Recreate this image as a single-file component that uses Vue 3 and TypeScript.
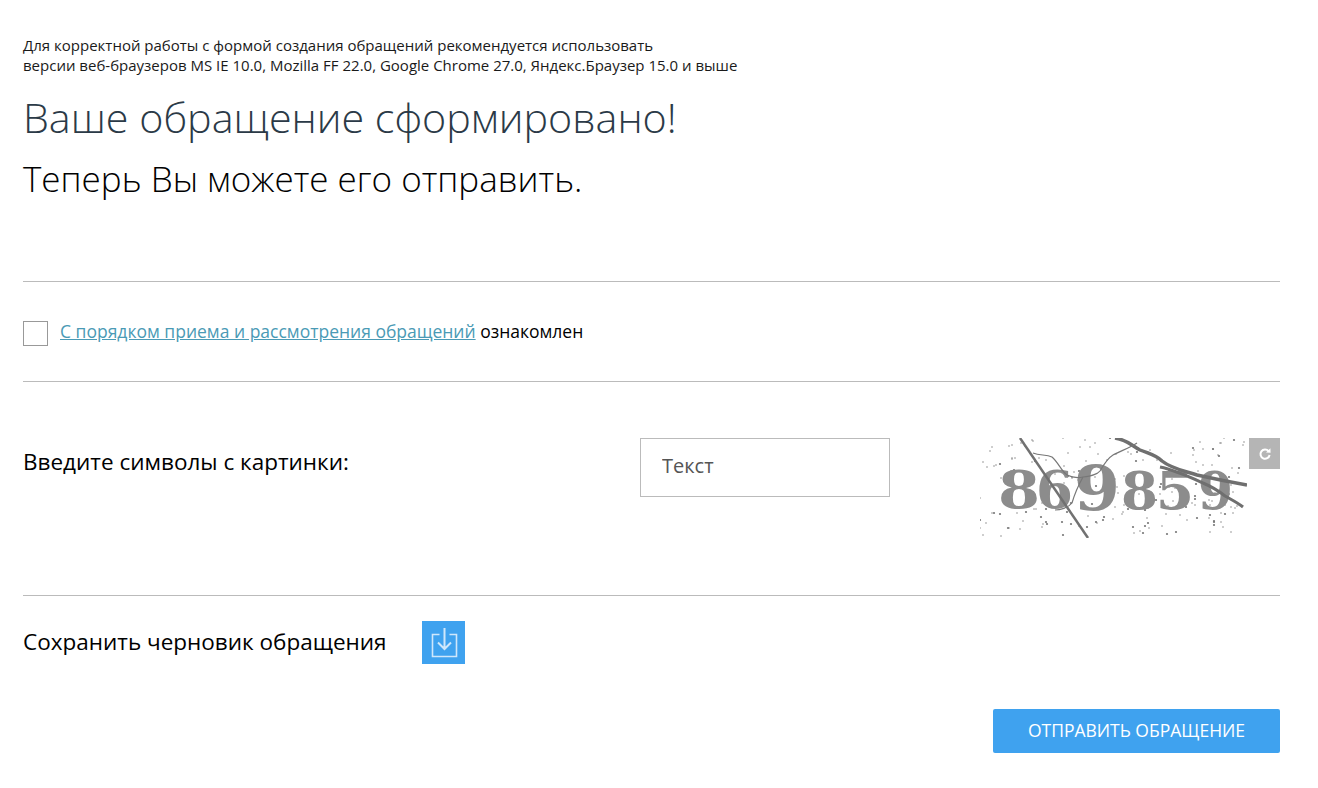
<script setup lang="ts">
// simple seeded noise so the captcha speckle stays the same between renders
let seed = 7
const rnd = () => {
  seed = (seed * 16807) % 2147483647
  return seed / 2147483647
}
const dots = Array.from({ length: 210 }, () => ({
  x: Math.round(rnd() * 265),
  y: Math.round(rnd() * 98),
  r: rnd() > 0.7 ? 1.1 : 0.7,
}))
const digits = [
  { ch: '8', x: 18, y: 70, size: 53, w: 42 },
  { ch: '6', x: 56, y: 70, size: 53, w: 37 },
  { ch: '9', x: 94, y: 72, size: 62, w: 46 },
  { ch: '8', x: 141, y: 71, size: 53, w: 37 },
  { ch: '5', x: 176, y: 71, size: 53, w: 38 },
  { ch: '9', x: 218, y: 71, size: 53, w: 35 },
]
</script>

<template>
  <div class="page">
    <p class="note">
      Для корректной работы с формой создания обращений рекомендуется использовать<br>
      версии веб-браузеров MS IE 10.0, Mozilla FF 22.0, Google Chrome 27.0, Яндекс.Браузер 15.0 и выше
    </p>
    <h1 class="title">Ваше обращение сформировано!</h1>
    <h2 class="subtitle">Теперь Вы можете его отправить.</h2>

    <div class="agree">
      <input class="agree__check" type="checkbox" id="agree">
      <label class="agree__label" for="agree"><a href="#" class="agree__link">С порядком приема и рассмотрения обращений</a> ознакомлен</label>
    </div>

    <div class="captcha">
      <div class="captcha__label">Введите символы с картинки:</div>
      <input class="captcha__input" type="text" placeholder="Текст">
      <svg class="captcha__image" width="267" height="100" viewBox="0 0 267 100">
        <circle v-for="(d, i) in dots" :key="i" :cx="d.x" :cy="d.y" :r="d.r" fill="#777" />
        <text
          v-for="(d, i) in digits"
          :key="'d' + i"
          :x="d.x"
          :y="d.y"
          :font-size="d.size"
          :textLength="d.w"
          lengthAdjust="spacingAndGlyphs"
          font-family="'DejaVu Serif', serif"
          font-weight="700"
          fill="#8c8c8c"
        >{{ d.ch }}</text>
        <path d="M40 0L108 100" stroke="#717171" stroke-width="2.5" fill="none" />
        <path d="M135 0C148 2 152 8 160 12C170 16 176 17 182 23C192 31 205 33 217 37C235 41 250 44 267 47" stroke="#6f6f6f" stroke-width="3.5" fill="none" />
        <path d="M180 29C195 32 212 40 223 45C235 50 240 54 245 58C252 62 258 65 263 69" stroke="#6f6f6f" stroke-width="3" fill="none" />
        <path d="M53 15C60 18 66 16 72 19C78 24 82 34 87 37C93 40 98 40 103 39C110 38 117 37 120 33C124 26 128 20 133 17C140 13 150 10 157 5M103 39C98 48 94 58 92 65C88 70 80 72 75 72" stroke="#777" stroke-width="1.2" fill="none" />
      </svg>
      <button class="captcha__refresh" type="button" aria-label="Обновить">
        <svg width="14" height="14" viewBox="0 0 14 14">
          <path d="M10.6 4.2A4.6 4.6 0 1 0 11.6 8" stroke="#fff" stroke-width="2" fill="none" />
          <path d="M8 5.4L12.6 5.8L12.4 1.2Z" fill="#fff" />
        </svg>
      </button>
    </div>

    <div class="draft">
      <span class="draft__label">Сохранить черновик обращения</span>
      <button class="draft__btn" type="button" aria-label="Сохранить">
        <svg class="draft__icon" width="27" height="32" viewBox="0 0 27 32">
          <path d="M8.5 7.5H1.5V29.5H25.5V7.5H18.5" stroke="#cfe7fb" stroke-width="1.6" fill="none" />
          <path d="M13.5 1V21.5M7 15.5L13.5 22L20 15.5" stroke="#cfe7fb" stroke-width="2" fill="none" />
        </svg>
      </button>
    </div>

    <div class="actions">
      <button class="submit" type="button">ОТПРАВИТЬ ОБРАЩЕНИЕ</button>
    </div>
  </div>
</template>

<style>
body {
  background: #fff;
}
</style>

<style scoped>
.page {
  box-sizing: border-box;
  width: 1318px;
  height: 788px;
  padding: 35px 38px 0 23px;
  font-family: "Open Sans", "Noto Sans", sans-serif;
  color: #000;
  overflow: hidden;
}

.note {
  margin: 0;
  font-size: 15px;
  line-height: 20px;
  color: #1a1a1a;
}

.title {
  margin: 17px 0 0;
  font-size: 41.25px;
  line-height: 50px;
  font-weight: 300;
  color: #2b3a47;
}

.subtitle {
  margin: 13px 0 0;
  font-size: 35px;
  line-height: 48px;
  font-weight: 300;
  color: #000;
}

.agree {
  display: flex;
  align-items: center;
  gap: 12px;
  height: 99px;
  margin-top: 78px;
  border-top: 1px solid #bbb;
  border-bottom: 1px solid #bbb;
  font-size: 17.5px;
}

.agree__check {
  appearance: none;
  box-sizing: border-box;
  width: 25px;
  height: 25px;
  margin: 3px 0 0;
  border: 1px solid #999;
  background: #fff;
}

.agree__label {
  margin-bottom: 2px;
}

.agree__link {
  color: #4a9ab5;
  text-decoration: underline;
}

.captcha {
  display: flex;
  align-items: flex-start;
  height: 156px;
  padding-top: 56px;
  padding-bottom: 1px;
  box-sizing: content-box;
  border-bottom: 1px solid #bbb;
}

.captcha__label {
  width: 617px;
  margin-top: 9px;
  font-size: 22.5px;
  line-height: 30px;
}

.captcha__input {
  box-sizing: border-box;
  width: 250px;
  height: 59px;
  padding: 0 21px 4px;
  border: 1px solid #bbb;
  background: #fff;
  font: 20px "Open Sans", sans-serif;
  outline: none;
}

.captcha__input::placeholder {
  color: #555;
  opacity: 1;
}

.captcha__image {
  display: block;
  margin-left: 90px;
  filter: blur(0.5px);
}

.captcha__refresh {
  display: flex;
  align-items: center;
  justify-content: center;
  width: 31px;
  height: 31px;
  margin-left: 2px;
  padding: 0;
  border: 0;
  background: #b5b5b5;
}

.draft {
  display: flex;
  align-items: center;
  gap: 35px;
  margin-top: 25px;
  font-size: 22.5px;
}

.draft__label {
  margin-bottom: 2px;
}

.draft__btn {
  display: flex;
  align-items: center;
  justify-content: center;
  width: 43px;
  height: 43px;
  padding: 0;
  border: 0;
  background: #3fa2ef;
}

.draft__icon {
  margin-left: 2px;
}

.actions {
  display: flex;
  justify-content: flex-end;
  margin-top: 45px;
}

.submit {
  width: 287px;
  height: 44px;
  padding: 0 0 2px;
  border: 0;
  border-radius: 2px;
  background: #3fa2ef;
  color: #fff;
  font: 500 17.5px "Open Sans", sans-serif;
}
</style>
